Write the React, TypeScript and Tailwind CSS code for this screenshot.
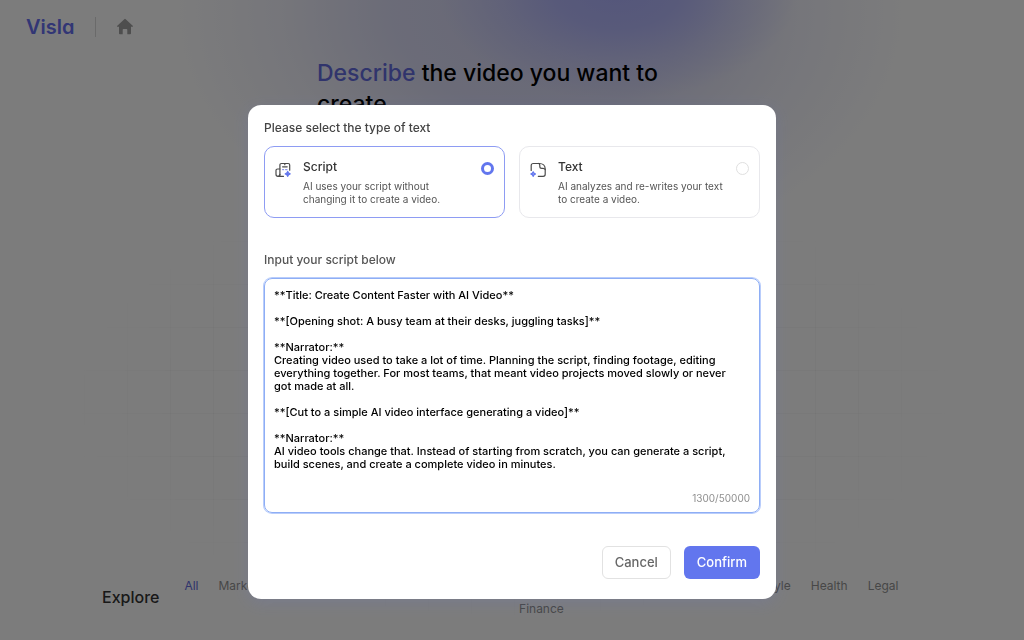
import React, { useState } from 'react';

type TextType = 'script' | 'text';

const initialScript = `**Title: Create Content Faster with AI Video**

**[Opening shot: A busy team at their desks, juggling tasks]**

**Narrator:**
Creating video used to take a lot of time. Planning the script, finding footage, editing everything together. For most teams, that meant video projects moved slowly or never got made at all.

**[Cut to a simple AI video interface generating a video]**

**Narrator:**
AI video tools change that. Instead of starting from scratch, you can generate a script, build scenes, and create a complete video in minutes.`;

const HomeIcon = () => (
  <svg viewBox="0 0 18 18" className="h-[18px] w-[18px]" fill="#9c9c9c">
    <path d="M8.3 1.2a1 1 0 0 1 1.4 0l7 6.6c.5.5.3 1-.3 1H15v6.700c0 .5-.4.8-.8.8h-2.900v-4.500c0-.5-.3-.8-.8-.8H7.500c-.5 0-.8.3-.8.8v4.500H3.800c-.5 0-.8-.3-.8-.8V8.800H1.600c-.6 0-.8-.5-.3-1z" />
  </svg>
);

const ScriptIcon = () => (
  <svg viewBox="0 0 16 16" className="h-4 w-4 shrink-0" fill="none" stroke="#4b4b4b" strokeWidth="1.2" strokeLinecap="round" strokeLinejoin="round">
    <path d="M8.500 14.300H3.200M4.900 13V3.100c0-1 .6-1.600 1.600-1.600h6.700c1 0 1.500.6 1.500 1.600v5.100" />
    <path d="M4.900 7H2.600C1.600 7 1 7.600 1 8.600v3.700c0 1.200.8 2 2 2s1.900-.8 1.900-2" />
    <path d="M9.800 1.500v1.200M7.600 4.800h4.600" />
    <path d="M7.600 7.600h1M10.600 7.600h1.400" stroke="#8a94e8" />
    <path d="M12.700 9.400c.3 1.500 1 2.200 2.500 2.500-1.500.3-2.200 1-2.500 2.500-.3-1.500-1-2.200-2.500-2.500 1.500-.3 2.200-1 2.500-2.500z" fill="#6276ee" stroke="#6276ee" />
  </svg>
);

const TextIcon = () => (
  <svg viewBox="0 0 16 16" className="h-4 w-4 shrink-0" fill="none" stroke="#4b4b4b" strokeWidth="1.2" strokeLinecap="round" strokeLinejoin="round">
    <path d="M1.200 8.500V3.500c0-1.200.8-2 2-2h6.300c3.300 0 5.700 2.300 5.700 5.500v5.300c0 1.200-.8 2-2 2H8.300" />
    <path d="M8.800 1.500c.8.400 1 1.100 1 2v1c0 1.200.8 1.900 2 1.900h1.200c1 0 1.800.4 2.200 1.200" />
    <path d="M3.200 9.900c.2 1.300.8 1.900 2.100 2.100-1.300.3-1.900.9-2.100 2.200-.3-1.300-.9-1.900-2.200-2.200 1.300-.2 1.900-.8 2.200-2.100z" stroke="#6276ee" strokeWidth="1.5" />
  </svg>
);

interface TypeCardProps {
  value: TextType;
  title: string;
  description: string;
  icon: React.ReactNode;
  checked: boolean;
  onSelect: (value: TextType) => void;
}

const TypeCard: React.FC<TypeCardProps> = ({ value, title, description, icon, checked, onSelect }) => (
  <label
    className={`flex flex-1 cursor-pointer items-start rounded-[10px] border px-[10px] pt-[13px] pb-[11px] ${
      checked ? 'border-[#8e9cf3]' : 'border-[#e8e8ec]'
    }`}
  >
    <span className="pt-[2px]">{icon}</span>
    <span className="ml-3 flex-1">
      <span className="block text-[12px] leading-[14px] font-medium text-[#333]">{title}</span>
      <span className="mt-[6px] block max-w-[170px] text-[10px] leading-[13px] text-[#555]">{description}</span>
    </span>
    <input
      type="radio"
      name="textType"
      value={value}
      checked={checked}
      onChange={() => onSelect(value)}
      className="mt-[2px] h-[13px] w-[13px] shrink-0 appearance-none rounded-full border border-[#e0e0e0] bg-white checked:border-[3px] checked:border-[#6276ee]"
    />
  </label>
);

const Tab: React.FC<{ children: React.ReactNode; active?: boolean; className?: string }> = ({
  children,
  active,
  className = '',
}) => (
  <a href="#" className={`${active ? 'text-[#6068d8]' : 'text-[#8f8f8f]'} ${className}`}>
    {children}
  </a>
);

export default function App() {
  const [type, setType] = useState<TextType>('script');
  const [script, setScript] = useState(initialScript);

  return (
    <div className="relative flex h-screen flex-col overflow-hidden bg-[#f9f9f9] font-['Inter',sans-serif]">
      {/* Hero glow and grid */}
      <div className="absolute inset-0 bg-[radial-gradient(ellipse_180px_110px_at_618px_-10px,#a9adf6_0%,#a9adf6d0_35%,#a9adf660_65%,transparent_100%),radial-gradient(ellipse_370px_260px_at_540px_10px,#cfd0ee_0%,#cfd0eed0_40%,#cfd0ee50_70%,transparent_100%)]" />
      <div className="absolute inset-0 bg-[linear-gradient(to_right,#00000007_1px,transparent_1px),linear-gradient(to_bottom,#00000007_1px,transparent_1px)] mask-[radial-gradient(ellipse_460px_230px_at_512px_400px,black_70%,transparent_100%)] bg-[size:43px_43px] bg-[position:-2px_-17px]" />

      <header className="relative flex h-[53px] items-center pl-[26px]">
        <a href="#" className="text-[20px] leading-6 font-semibold text-[#646cea] [font-feature-settings:'cv11']">
          Visla
        </a>
        <span className="ml-5 h-5 w-px bg-[#d4d4d4]" />
        <button className="ml-5" aria-label="Home">
          <HomeIcon />
        </button>
      </header>

      <main className="relative flex flex-1 flex-col">
        <h1 className="mx-auto mt-[5px] w-[390px] text-[23px] leading-[31px] font-medium text-black">
          <span className="text-[#6068d8]">Describe</span> <span>the video you want to</span> <span>create</span>
        </h1>

        <section className="mt-auto flex items-center px-[102px] pb-6">
          <h2 className="text-[16px] leading-5 font-medium text-[#333]">Explore</h2>
          <nav className="ml-[25px] max-w-[714px] flex-1 text-[12px] leading-[15px]">
            <div className="flex gap-5">
              <Tab active>All</Tab>
              <Tab>Marketing</Tab>
              <Tab className="ml-auto">Lifestyle</Tab>
              <Tab>Health</Tab>
              <Tab>Legal</Tab>
            </div>
            <div className="mt-2 flex justify-center">
              <Tab>Finance</Tab>
            </div>
          </nav>
        </section>
      </main>

      {/* Backdrop */}
      <div className="fixed inset-0 z-50 flex items-start justify-center bg-black/50 px-4 pt-[105px]">
        <form
          role="dialog"
          aria-label="Text input"
          onSubmit={(e) => e.preventDefault()}
          className="w-full max-w-[528px] rounded-[13px] bg-white px-4 pt-[15px] pb-5 shadow-[0_4px_16px_#6276ee26]"
        >
          <h3 className="text-[12px] leading-[15px] font-medium text-[#444]">Please select the type of text</h3>
          <div className="mt-[11px] flex gap-[14px]">
            <TypeCard
              value="script"
              title="Script"
              description="AI uses your script without changing it to create a video."
              icon={<ScriptIcon />}
              checked={type === 'script'}
              onSelect={setType}
            />
            <TypeCard
              value="text"
              title="Text"
              description="AI analyzes and re-writes your text to create a video."
              icon={<TextIcon />}
              checked={type === 'text'}
              onSelect={setType}
            />
          </div>

          <label htmlFor="script" className="mt-[34px] block text-[12px] leading-[15px] font-medium text-[#555]">
            Input your script below
          </label>
          <div className="mt-[11px] rounded-lg border border-[#8eaef5] pt-[10px] pb-[7px] shadow-[0_0_0_1px_#b9cdfb]">
            <textarea
              id="script"
              value={script}
              onChange={(e) => setScript(e.target.value)}
              className="block h-[202px] w-full resize-none overflow-hidden pr-6 pl-[9px] text-[11px] leading-[13px] font-medium text-black outline-none"
            />
            <p className="px-[9px] text-right text-[10px] leading-[14px] text-[#8f8f8f]">1300/50000</p>
          </div>

          <div className="mt-[33px] flex justify-end gap-[13px]">
            <button
              type="button"
              className="h-[33px] rounded-[6px] border border-[#e2e2e2] px-3 text-[13px] font-medium text-[#666]"
            >
              Cancel
            </button>
            <button
              type="submit"
              className="h-[33px] rounded-[6px] bg-[#6276ee] px-[13px] text-[13px] font-medium text-white"
            >
              Confirm
            </button>
          </div>
        </form>
      </div>
    </div>
  );
}
